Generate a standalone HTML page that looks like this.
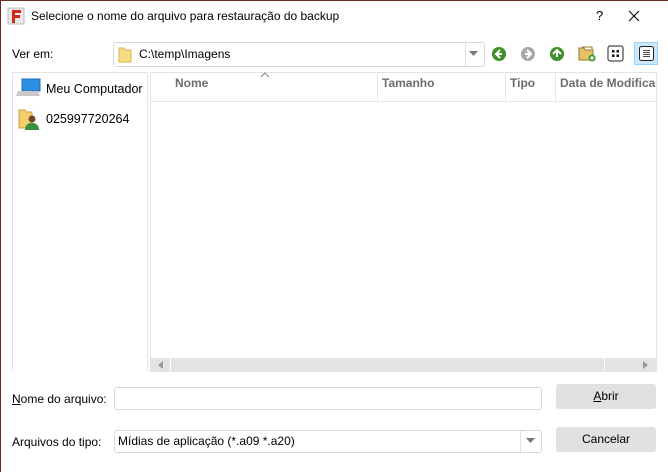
<!DOCTYPE html>
<html><head><meta charset="utf-8"><style>
*{box-sizing:border-box;margin:0;padding:0}
body{width:668px;height:472px;background:#fff;font-family:"Liberation Sans",sans-serif;font-size:12px;color:#000;position:relative;overflow:hidden}
.a{position:absolute}
.box{position:absolute;border:1px solid #d9d9d9;border-radius:3px;background:#fff}
.btn{position:absolute;background:#e1e1e1;border-radius:3px;text-align:center;line-height:25px;font-size:12px}
.hdr{position:absolute;top:76px;font-weight:bold;color:#6d6d6d;font-size:12px}
.sep{position:absolute;top:73px;width:1px;height:28px;background:#e6e6e6}
</style></head><body>
<div class="a" style="left:0;top:0;width:668px;height:1px;background:#6b2e22"></div>
<div class="a" style="left:0;top:0;width:1px;height:472px;background:#6b2e22"></div>
<svg class="a" style="left:7px;top:7px" width="18" height="18"><rect x="1" y="1" width="16" height="16" fill="#e8e8e8" stroke="#bbb"/><path d="M5 3h9v3H8v2h5v3H8v5H5z" fill="#d42a1c"/></svg>
<div class="a" style="left:31px;top:9px;font-size:12px">Selecione o nome do arquivo para restauração do backup</div>
<div class="a" style="left:596px;top:8px;font-size:13px">?</div>
<svg class="a" style="left:628px;top:10px" width="12" height="12"><path d="M1 1L11 11M11 1L1 11" stroke="#000" stroke-width="1.1"/></svg>

<div class="a" style="left:12px;top:47px">Ver em:</div>
<div class="box" style="left:113px;top:42px;width:372px;height:25px"></div>
<div class="a" style="left:465px;top:43px;width:1px;height:23px;background:#e0e0e0"></div>
<svg class="a" style="left:469px;top:51px" width="10" height="6"><path d="M0 0h9L4.5 5z" fill="#777"/></svg>
<svg class="a" style="left:118px;top:46px" width="14" height="17"><path d="M1 2h5l1 2h6v12H1z" fill="#f6dc84" stroke="#d8b74a"/></svg>
<div class="a" style="left:139px;top:47px">C:\temp\Imagens</div>

<svg class="a" style="left:491px;top:46px" width="16" height="16"><circle cx="8" cy="8" r="7" fill="#3f8f2a"/><path d="M9 4L5 8l4 4M5 8h6" stroke="#fff" stroke-width="2" fill="none"/></svg>
<svg class="a" style="left:520px;top:46px" width="16" height="16"><circle cx="8" cy="8" r="7" fill="#a8a8a8"/><path d="M7 4l4 4-4 4M11 8H5" stroke="#fff" stroke-width="2" fill="none"/></svg>
<svg class="a" style="left:549px;top:46px" width="16" height="16"><circle cx="8" cy="8" r="7" fill="#3f8f2a"/><path d="M4 8l4-4 4 4M8 4v7" stroke="#fff" stroke-width="2" fill="none"/></svg>
<svg class="a" style="left:578px;top:44px" width="18" height="18"><path d="M1 4h5l1 2h8v10H1z" fill="#e6c168" stroke="#a07a2a"/><path d="M4 3h10v3" stroke="#a07a2a" fill="none"/><circle cx="14" cy="14" r="3.5" fill="#3a9a2a"/><path d="M14 12v4M12 14h4" stroke="#fff" stroke-width="1.3"/></svg>
<svg class="a" style="left:607px;top:45px" width="17" height="17"><rect x="1" y="1" width="15" height="15" rx="2" fill="#fff" stroke="#222"/><rect x="5" y="5" width="2.5" height="2.5" fill="#111"/><rect x="9.5" y="5" width="2.5" height="2.5" fill="#111"/><rect x="5" y="9.5" width="2.5" height="2.5" fill="#111"/><rect x="9.5" y="9.5" width="2.5" height="2.5" fill="#111"/></svg>
<div class="a" style="left:634px;top:42px;width:24px;height:23px;background:#cce8ff;border:1px solid #99d1ff"></div>
<svg class="a" style="left:638px;top:45px" width="17" height="17"><rect x="1.5" y="1.5" width="14" height="14" rx="2" fill="#fff" stroke="#222"/><path d="M5 5.5h7M5 7.5h7M5 9.5h7M5 11.5h7" stroke="#111" stroke-width="0.8"/></svg>

<div class="a" style="left:12px;top:72px;width:136px;height:299px;border:1px solid #e3e3e3;border-bottom:none"></div>
<svg class="a" style="left:16px;top:77px" width="26" height="22"><rect x="6" y="2" width="18" height="12" fill="#2d8fe0" stroke="#1e6fb5"/><path d="M2 14h20l2 5H0z" fill="#c9c9c9"/></svg>
<div class="a" style="left:46px;top:82px;font-size:12.5px">Meu Computador</div>
<svg class="a" style="left:18px;top:108px" width="24" height="24"><path d="M1 2h6l1 2h6v16H1z" fill="#f2cf6a" stroke="#c9a24a"/><circle cx="14" cy="11" r="3.5" fill="#6b4a2a"/><path d="M7 22c0-5 3-7 7-7s7 2 7 7z" fill="#3b8f3a"/></svg>
<div class="a" style="left:46px;top:112px;font-size:12.5px">025997720264</div>

<div class="a" style="left:150px;top:72px;width:507px;height:300px;border:1px solid #e3e3e3"></div>
<div class="a" style="left:151px;top:101px;width:505px;height:1px;background:#e8e8e8"></div>
<svg class="a" style="left:260px;top:72px" width="10" height="6"><path d="M1 5l4-4 4 4" stroke="#888" fill="none"/></svg>
<div class="hdr" style="left:175px">Nome</div>
<div class="sep" style="left:377px"></div><div class="hdr" style="left:382px">Tamanho</div>
<div class="sep" style="left:505px"></div><div class="hdr" style="left:510px">Tipo</div>
<div class="sep" style="left:555px"></div><div class="hdr" style="left:560px;width:96px;overflow:hidden;white-space:nowrap">Data de Modificação</div>
<div class="a" style="left:151px;top:358px;width:505px;height:13px;background:#e3e3e3"></div>
<svg class="a" style="left:158px;top:361px" width="6" height="8"><path d="M5 0v8L0 4z" fill="#999"/></svg>
<div class="a" style="left:170px;top:358px;width:1px;height:13px;background:#fff"></div>
<div class="a" style="left:604px;top:358px;width:1px;height:13px;background:#fff"></div>
<svg class="a" style="left:643px;top:361px" width="6" height="8"><path d="M0 0v8L5 4z" fill="#999"/></svg>

<div class="a" style="left:12px;top:392px"><u>N</u>ome do arquivo:</div>
<div class="box" style="left:114px;top:387px;width:428px;height:23px"></div>
<div class="btn" style="left:556px;top:384px;width:100px;height:25px"><u>A</u>brir</div>

<div class="a" style="left:12px;top:435px">Arquivos do tipo:</div>
<div class="box" style="left:114px;top:430px;width:428px;height:23px"></div>
<div class="a" style="left:118px;top:434px">Mídias de aplicação (*.a09 *.a20)</div>
<div class="a" style="left:520px;top:431px;width:1px;height:21px;background:#e0e0e0"></div>
<svg class="a" style="left:526px;top:438px" width="10" height="6"><path d="M0 0h9L4.5 5z" fill="#777"/></svg>
<div class="btn" style="left:556px;top:427px;width:100px;height:25px">Cancelar</div>
</body></html>
